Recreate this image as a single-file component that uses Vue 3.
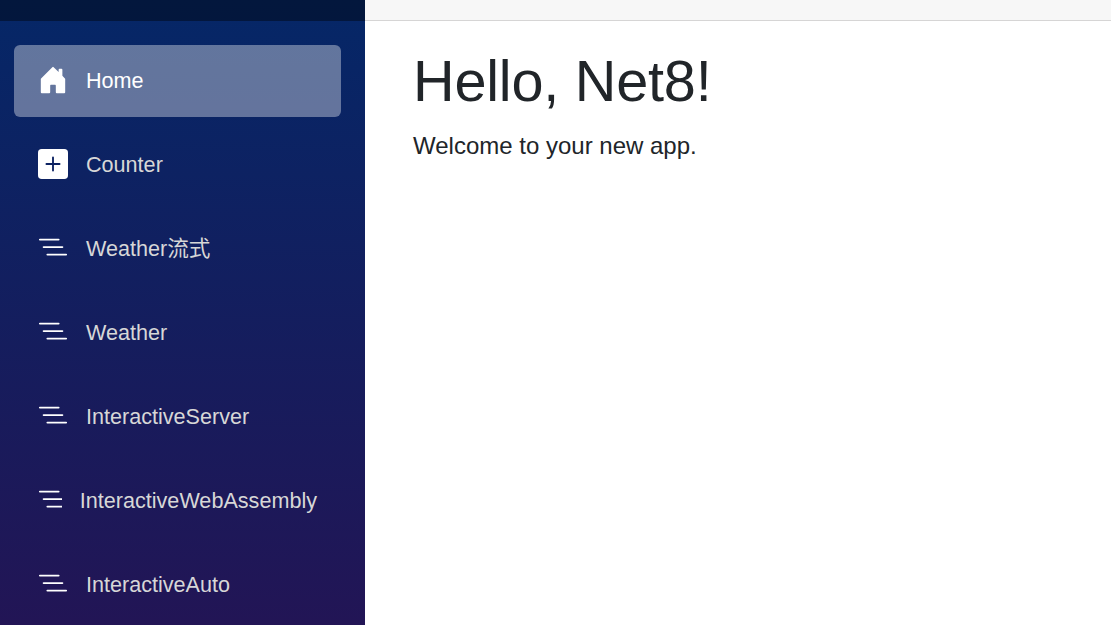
<script setup>
const links = [
  { text: 'Home', icon: 'home', active: true },
  { text: 'Counter', icon: 'plus' },
  { text: 'Weather流式', icon: 'list' },
  { text: 'Weather', icon: 'list' },
  { text: 'InteractiveServer', icon: 'list' },
  { text: 'InteractiveWebAssembly', icon: 'list' },
  { text: 'InteractiveAuto', icon: 'list' }
]
</script>

<template>
  <div class="page">
    <aside class="sidebar">
      <div class="top-row"></div>
      <nav class="nav-scroll">
        <div v-for="link in links" :key="link.text" class="nav-item">
          <a class="nav-link" :class="{ active: link.active }">
            <span class="icon">
              <svg v-if="link.icon === 'home'" viewBox="0 0 16 16" fill="#fff">
                <path d="M6.5 14.5v-3.505c0-.245.25-.495.5-.495h2c.25 0 .5.25.5.5v3.5a.5.5 0 0 0 .5.5h4a.5.5 0 0 0 .5-.5v-7a.5.5 0 0 0-.146-.354L13 5.793V2.5a.5.5 0 0 0-.5-.5h-1a.5.5 0 0 0-.5.5v1.293L8.354 1.146a.5.5 0 0 0-.708 0l-6 6A.5.5 0 0 0 1.5 7.5v7a.5.5 0 0 0 .5.5h4a.5.5 0 0 0 .5-.5Z" />
              </svg>
              <svg v-else-if="link.icon === 'plus'" viewBox="0 0 16 16" fill="#fff">
                <path d="M2 0a2 2 0 0 0-2 2v12a2 2 0 0 0 2 2h12a2 2 0 0 0 2-2V2a2 2 0 0 0-2-2H2zm6.5 4.5v3h3a.5.5 0 0 1 0 1h-3v3a.5.5 0 0 1-1 0v-3h-3a.5.5 0 0 1 0-1h3v-3a.5.5 0 0 1 1 0z" />
              </svg>
              <svg v-else viewBox="0 0 16 16" fill="#fff">
                <path fill-rule="evenodd" d="M4.5 11.5A.5.5 0 0 1 5 11h10a.5.5 0 0 1 0 1H5a.5.5 0 0 1-.5-.5zm-2-4A.5.5 0 0 1 3 7h10a.5.5 0 0 1 0 1H3a.5.5 0 0 1-.5-.5zm-2-4A.5.5 0 0 1 1 3h10a.5.5 0 0 1 0 1H1a.5.5 0 0 1-.5-.5z" />
              </svg>
            </span>
            <span class="label">{{ link.text }}</span>
          </a>
        </div>
      </nav>
    </aside>
    <main class="main">
      <div class="bar"></div>
      <article class="content">
        <h1>Hello, Net8!</h1>
        <p>Welcome to your new app.</p>
      </article>
    </main>
  </div>
</template>

<style>
html, body {
  margin: 0;
  overflow: hidden;
}
</style>

<style scoped>
.page {
  display: flex;
  height: 100vh;
  font-family: "Liberation Sans", "Noto Sans CJK SC", sans-serif;
  color: #212529;
  background: #fff;
}
.sidebar {
  flex: 0 0 365px;
  background: linear-gradient(180deg, rgb(5, 39, 103) 0, #3a0647 1136px);
  overflow: hidden;
}
.top-row {
  height: 21px;
  background: rgba(0, 0, 0, 0.4);
}
.nav-scroll {
  padding: 24px 24px 0 14px;
}
.nav-item {
  padding-bottom: 12px;
}
.nav-link {
  display: flex;
  align-items: center;
  height: 72px;
  padding: 0 24px;
  border-radius: 6px;
  font-size: 21.6px;
  line-height: 32px;
  color: #d7d7d7;
  white-space: nowrap;
}
.nav-link.active {
  background: rgba(255, 255, 255, 0.37);
  color: #fff;
}
.icon {
  flex: 0 1 30px;
  min-width: 0;
  height: 30px;
  margin-right: 18px;
  margin-bottom: 2px;
  overflow: hidden;
}
.icon svg {
  display: block;
  width: 30px;
  height: 30px;
}
.main {
  flex: 1;
}
.bar {
  height: 20px;
  background: #f7f7f7;
  border-bottom: 1px solid #d6d5d5;
}
.content {
  padding: 24px 48px 0;
}
h1 {
  margin: 0 0 11px;
  font-size: 57.6px;
  font-weight: 400;
  line-height: 72px;
  letter-spacing: -0.2px;
}
p {
  margin: 0;
  font-size: 24px;
  line-height: 36px;
}
</style>
